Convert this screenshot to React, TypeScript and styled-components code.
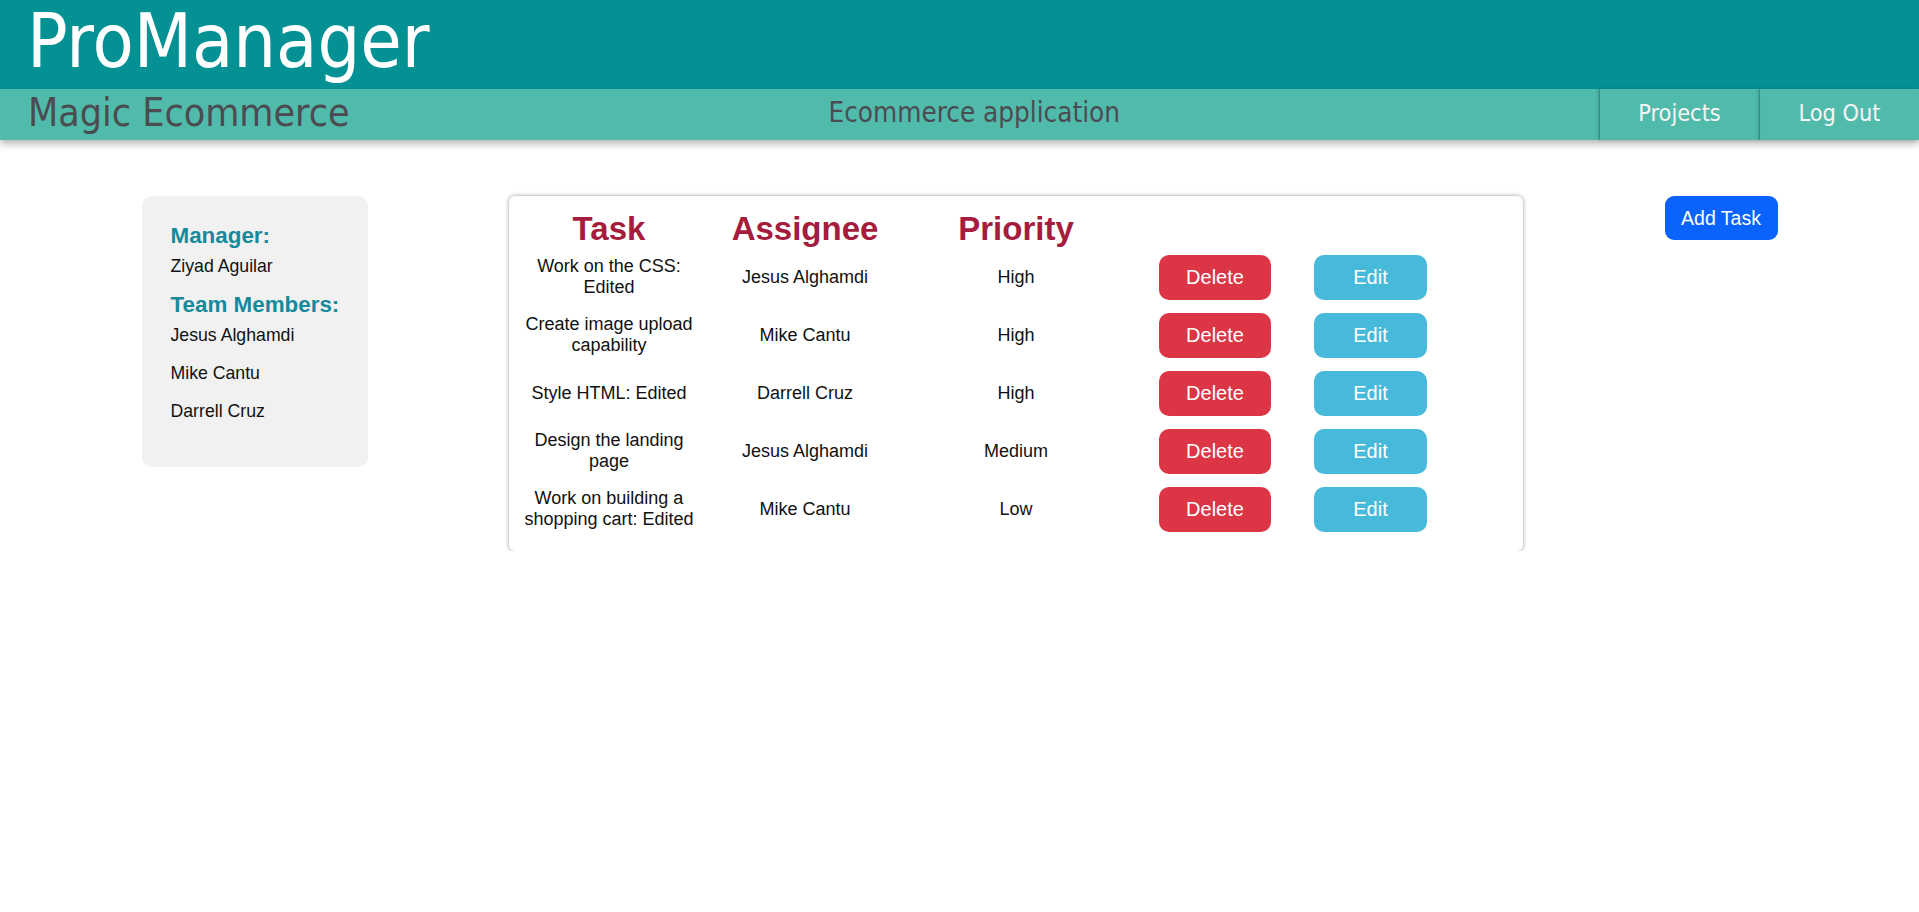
import React from "react";
import styled, { createGlobalStyle } from "styled-components";

const GlobalStyle = createGlobalStyle`
  html, body {
    margin: 0;
    padding: 0;
    background: #ffffff;
  }
  body {
    font-family: "Liberation Sans", Arial, sans-serif;
  }
  * { box-sizing: border-box; }
`;

const Header = styled.header`
  display: flex;
  flex-direction: column;
  box-shadow: 0 4px 7px rgba(0, 0, 0, 0.28);
  position: relative;
  z-index: 1;
`;

const TopBar = styled.div`
  height: 89px;
  background: #049194;
  display: flex;
  align-items: center;
  padding: 0 0 6px 27px;
`;

const Logo = styled.h1`
  margin: 0;
  font-family: "DejaVu Sans Condensed", "DejaVu Sans", sans-serif;
  font-stretch: condensed;
  font-weight: 400;
  font-size: 75px;
  line-height: 1;
  color: #ffffff;
`;

const SubBar = styled.div`
  height: 51px;
  background: #51bbab;
  display: flex;
  align-items: stretch;
  font-family: "DejaVu Sans Condensed", "DejaVu Sans", sans-serif;
  font-stretch: condensed;
`;

const Brand = styled.div`
  display: flex;
  align-items: center;
  padding: 0 0 4px 28px;
  font-size: 39px;
  color: #4b4b52;
  white-space: nowrap;
`;

const ProjectName = styled.div`
  flex: 1;
  display: flex;
  align-items: center;
  justify-content: center;
  padding-bottom: 4px;
  font-size: 27.6px;
  color: #4b4b52;
  white-space: nowrap;
`;

const Nav = styled.nav`
  display: flex;
  align-items: stretch;
`;

const NavItem = styled.a`
  width: 160px;
  display: flex;
  align-items: center;
  justify-content: center;
  padding-bottom: 4px;
  font-size: 23.3px;
  color: #f6f6f6;
  text-decoration: none;
  border-left: 1px solid #2b918c;
  box-shadow: -1px 0 3px rgba(0, 0, 0, 0.18);
  cursor: pointer;
`;

const Main = styled.main`
  display: flex;
  justify-content: space-evenly;
  align-items: flex-start;
  padding-top: 56px;
`;

const Sidebar = styled.aside`
  width: 226px;
  background: #f1f1f1;
  border-radius: 10px;
  padding: 27px 29px 45px;
  display: flex;
  flex-direction: column;
  gap: 15.5px;
`;

const Section = styled.section`
  display: flex;
  flex-direction: column;
`;

const Label = styled.h3`
  margin: 0 0 5.5px;
  font-size: 22.4px;
  line-height: 26px;
  font-weight: 700;
  color: #168a9b;
  white-space: nowrap;
`;

const MemberList = styled.div`
  display: flex;
  flex-direction: column;
  gap: 16px;
`;

const Name = styled.div`
  font-size: 17.7px;
  line-height: 22px;
  color: #111111;
`;

const Card = styled.div`
  width: 1014px;
  background: #ffffff;
  border-radius: 6px;
  box-shadow: 0 0 4px rgba(0, 0, 0, 0.4);
  padding: 14px 0 13px;
`;

const Row = styled.div<{ $header?: boolean }>`
  display: grid;
  grid-template-columns: 200px 192px 230px 168px 143px;
  align-items: center;
  height: ${(p) => (p.$header ? "auto" : "58px")};
`;

const HeadCell = styled.div`
  text-align: center;
  font-size: 33px;
  font-weight: 700;
  color: #a51c3d;
  line-height: normal;
`;

const Cell = styled.div`
  text-align: center;
  padding: 0 10px;
  font-size: 18px;
  line-height: normal;
  color: #111111;
`;

const ButtonCell = styled.div`
  display: flex;
  justify-content: center;
`;

const ActionButton = styled.button<{ $variant: "danger" | "info" }>`
  width: ${(p) => (p.$variant === "danger" ? "112px" : "113px")};
  height: 45px;
  border: none;
  border-radius: 10px;
  background: ${(p) => (p.$variant === "danger" ? "#dc3545" : "#47b9db")};
  color: #ffffff;
  font-family: "Liberation Sans", Arial, sans-serif;
  font-size: 20px;
  cursor: pointer;
`;

const AddButton = styled.button`
  width: 113px;
  height: 44px;
  border: none;
  border-radius: 9px;
  background: #0a63fd;
  color: #ffffff;
  font-family: "Liberation Sans", Arial, sans-serif;
  font-size: 19.5px;
  cursor: pointer;
`;

const tasks = [
  { task: "Work on the CSS: Edited", assignee: "Jesus Alghamdi", priority: "High" },
  { task: "Create image upload capability", assignee: "Mike Cantu", priority: "High" },
  { task: "Style HTML: Edited", assignee: "Darrell Cruz", priority: "High" },
  { task: "Design the landing page", assignee: "Jesus Alghamdi", priority: "Medium" },
  { task: "Work on building a shopping cart: Edited", assignee: "Mike Cantu", priority: "Low" },
];

const members = ["Jesus Alghamdi", "Mike Cantu", "Darrell Cruz"];

export default function App() {
  return (
    <>
      <GlobalStyle />
      <Header>
        <TopBar>
          <Logo>ProManager</Logo>
        </TopBar>
        <SubBar>
          <Brand>Magic Ecommerce</Brand>
          <ProjectName>Ecommerce application</ProjectName>
          <Nav>
            <NavItem>Projects</NavItem>
            <NavItem>Log Out</NavItem>
          </Nav>
        </SubBar>
      </Header>
      <Main>
        <Sidebar>
          <Section>
            <Label>Manager:</Label>
            <Name>Ziyad Aguilar</Name>
          </Section>
          <Section>
            <Label>Team Members:</Label>
            <MemberList>
              {members.map((m) => (
                <Name key={m}>{m}</Name>
              ))}
            </MemberList>
          </Section>
        </Sidebar>
        <Card>
          <Row $header>
            <HeadCell>Task</HeadCell>
            <HeadCell>Assignee</HeadCell>
            <HeadCell>Priority</HeadCell>
            <div />
            <div />
          </Row>
          {tasks.map((t, i) => (
            <Row key={i}>
              <Cell>{t.task}</Cell>
              <Cell>{t.assignee}</Cell>
              <Cell>{t.priority}</Cell>
              <ButtonCell>
                <ActionButton $variant="danger">Delete</ActionButton>
              </ButtonCell>
              <ButtonCell>
                <ActionButton $variant="info">Edit</ActionButton>
              </ButtonCell>
            </Row>
          ))}
        </Card>
        <AddButton>Add Task</AddButton>
      </Main>
    </>
  );
}
